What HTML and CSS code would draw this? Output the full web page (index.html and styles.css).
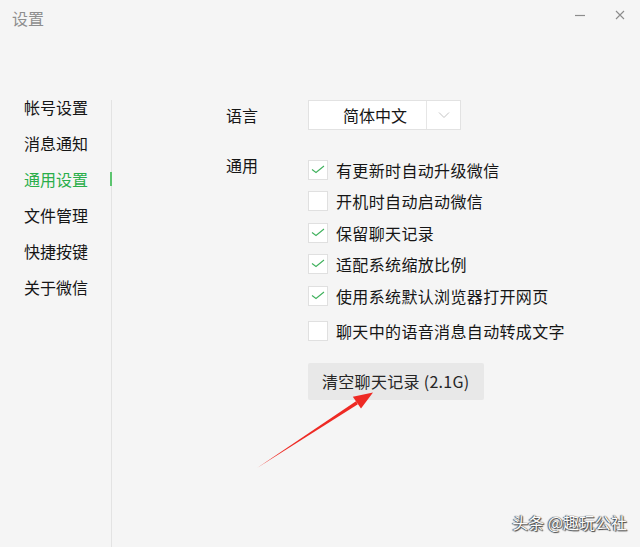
FILE: index.html
```html
<!DOCTYPE html>
<html lang="zh-CN">
<head>
<meta charset="utf-8">
<title>设置</title>
<link rel="stylesheet" href="styles.css">
</head>
<body>
<div class="window">
  <div class="titlebar">
    <span class="title">设置</span>
    <div class="controls">
      <span class="ctl ctl-min"><svg width="12" height="12" viewBox="0 0 12 12"><line x1="1" y1="6.5" x2="11" y2="6.5" stroke="#8c8c8c" stroke-width="1.2"/></svg></span>
      <span class="ctl ctl-close"><svg width="12" height="12" viewBox="0 0 12 12"><path d="M2 2 L10 10 M10 2 L2 10" stroke="#8c8c8c" stroke-width="1.1" fill="none"/></svg></span>
    </div>
  </div>
  <div class="main">
    <div class="sidebar">
      <ul class="nav">
        <li class="nav-item">帐号设置</li>
        <li class="nav-item">消息通知</li>
        <li class="nav-item active">通用设置</li>
        <li class="nav-item">文件管理</li>
        <li class="nav-item">快捷按键</li>
        <li class="nav-item">关于微信</li>
      </ul>
      <div class="divider"></div>
    </div>
    <div class="content">
      <div class="row row-lang">
        <div class="label">语言</div>
        <div class="dropdown">
          <div class="dd-value">简体中文</div>
          <div class="dd-arrow"><svg width="12" height="8" viewBox="0 0 12 8"><polyline points="1,1.5 6,6.5 11,1.5" fill="none" stroke="#c4c4c4" stroke-width="1"/></svg></div>
        </div>
      </div>
      <div class="row row-general">
        <div class="label label-top">通用</div>
        <div class="options">
          <div class="opt"><span class="box"><svg width="20" height="20" viewBox="0 0 20 20"><polyline points="4,9.5 8,12.5 16,6" fill="none" stroke="#3fb15c" stroke-width="1.1"/></svg></span><span class="opt-text">有更新时自动升级微信</span></div>
          <div class="opt"><span class="box"></span><span class="opt-text">开机时自动启动微信</span></div>
          <div class="opt"><span class="box"><svg width="20" height="20" viewBox="0 0 20 20"><polyline points="4,9.5 8,12.5 16,6" fill="none" stroke="#3fb15c" stroke-width="1.1"/></svg></span><span class="opt-text">保留聊天记录</span></div>
          <div class="opt"><span class="box"><svg width="20" height="20" viewBox="0 0 20 20"><polyline points="4,9.5 8,12.5 16,6" fill="none" stroke="#3fb15c" stroke-width="1.1"/></svg></span><span class="opt-text">适配系统缩放比例</span></div>
          <div class="opt"><span class="box"><svg width="20" height="20" viewBox="0 0 20 20"><polyline points="4,9.5 8,12.5 16,6" fill="none" stroke="#3fb15c" stroke-width="1.1"/></svg></span><span class="opt-text">使用系统默认浏览器打开网页</span></div>
          <div class="opt opt-last"><span class="box"></span><span class="opt-text">聊天中的语音消息自动转成文字</span></div>
          <button class="btn-clear">清空聊天记录 (2.1G)</button>
        </div>
      </div>
    </div>
  </div>
  <svg class="annot-arrow" width="640" height="547" viewBox="0 0 640 547">
    <polygon points="257,468 357.9,404.3 356,401.3" fill="#ee2a24"/>
    <polygon points="373,392.5 361,408.6 352.8,396.8" fill="#ee2a24"/>
  </svg>
  <div class="watermark">头条 @趣玩公社</div>
</div>
</body>
</html>
```
FILE: styles.css
```css
* { box-sizing: border-box; }
html, body { margin: 0; padding: 0; }
body {
  font-family: "Noto Sans CJK SC", "Microsoft YaHei", "Noto Sans", sans-serif;
  color: #161616;
  background: #f5f5f5;
}
.window {
  width: 640px;
  height: 547px;
  background: #f5f5f5;
  position: relative;
  overflow: hidden;
  display: flex;
  flex-direction: column;
}
.titlebar {
  height: 36px;
  display: flex;
  align-items: center;
  padding-left: 12px;
}
.title {
  font-size: 16px;
  line-height: 22px;
  color: #8e8e8e;
  margin-top: -1px;
}
.controls {
  margin-left: auto;
  display: flex;
  align-items: center;
  margin-top: -6px;
  margin-right: 14px;
  gap: 28px;
}
.ctl { display: flex; width: 12px; height: 12px; }
.main {
  flex: 1;
  display: flex;
  padding-top: 53px;
}
.sidebar {
  width: 112px;
  display: flex;
}
.nav {
  list-style: none;
  margin: 0;
  padding: 0 0 0 24px;
  width: 111px;
}
.nav-item {
  font-size: 16px;
  height: 36px;
  line-height: 36px;
  color: #161616;
  position: relative;
}
.nav-item.active { color: #2aae4a; }
.nav-item.active::after {
  content: "";
  position: absolute;
  right: -1px;
  top: 11px;
  width: 2px;
  height: 14px;
  background: #5cc46f;
}
.divider {
  width: 1px;
  background: #e3e3e3;
  margin-top: 11px;
}
.content {
  flex: 1;
  padding: 11px 0 0 114px;
}
.row { display: flex; }
.label {
  width: 82px;
  font-size: 16px;
  line-height: 30px;
}
.label-top { line-height: 22px; }
.dropdown {
  width: 153px;
  height: 30px;
  background: #fff;
  border: 1px solid #e2e2e2;
  display: flex;
}
.dd-value {
  width: 118px;
  border-right: 1px solid #e6e6e6;
  padding-left: 34px;
  font-size: 16px;
  line-height: 28px;
}
.dd-arrow {
  flex: 1;
  display: flex;
  align-items: center;
  justify-content: center;
  padding-bottom: 1px;
}
.row-general { margin-top: 24px; }
.options { display: flex; flex-direction: column; align-items: flex-start; }
.opt {
  height: 31.5px;
  display: flex;
  align-items: center;
}
.opt-last { margin-top: 3.5px; }
.box {
  width: 20px;
  height: 20px;
  background: #fff;
  border: 1px solid #e0e0e0;
  margin-right: 8px;
  display: flex;
  align-items: center;
  justify-content: center;
}
.box svg { flex: none; }
.opt-text {
  font-size: 16px;
  line-height: 22px;
  letter-spacing: 0.35px;
}
.btn-clear {
  margin-top: 16px;
  height: 37px;
  padding: 0 14px;
  border: none;
  border-radius: 2px;
  background: #e8e8e8;
  font-family: inherit;
  font-size: 16px;
  letter-spacing: 0.3px;
  color: #262626;
  line-height: 22px;
}
.annot-arrow {
  position: absolute;
  left: 0;
  top: 0;
  pointer-events: none;
}
.watermark {
  position: absolute;
  right: 13px;
  bottom: 14px;
  font-size: 16px;
  line-height: 22px;
  color: #fafafa;
  text-shadow: 0 0 1px #333, 1px 1px 1px #444, -1px 0 1px #555;
}
```
